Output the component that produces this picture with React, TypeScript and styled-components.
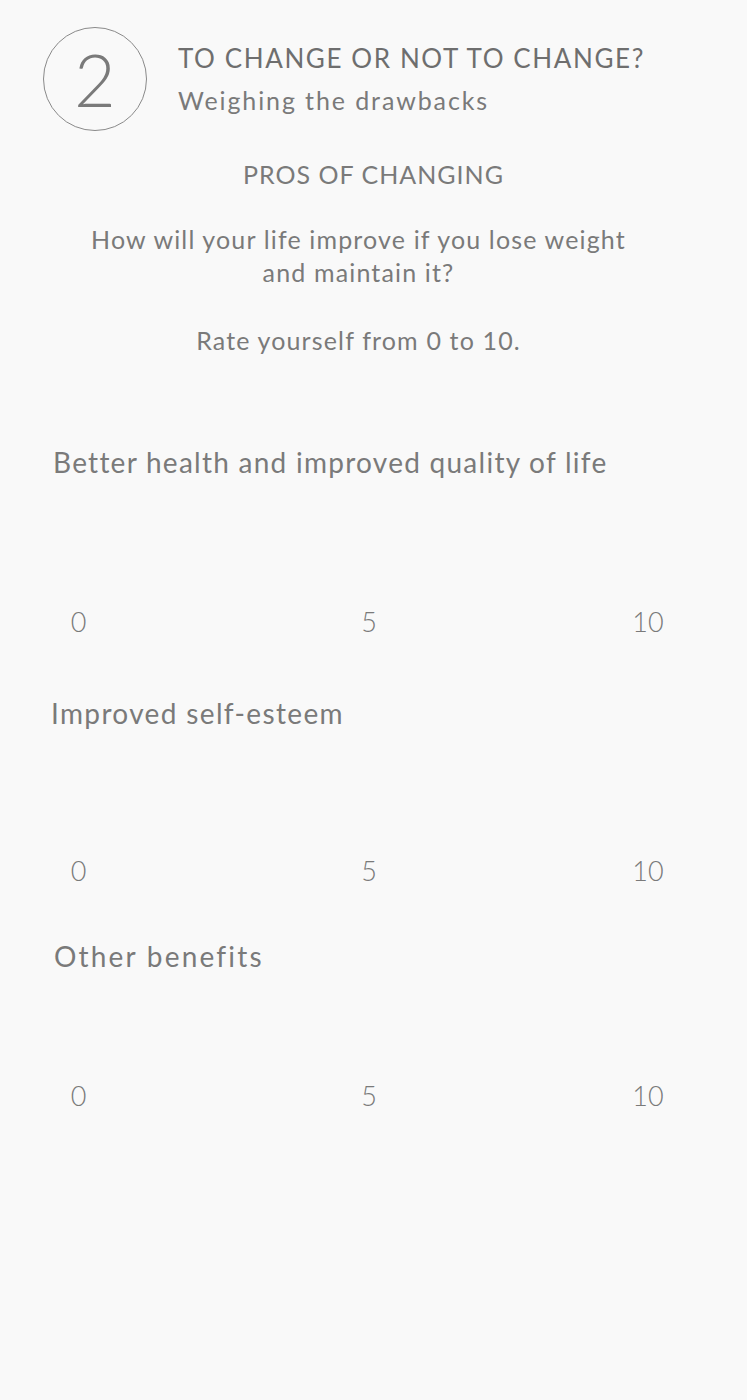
import React from "react";
import styled, { createGlobalStyle } from "styled-components";

const Global = createGlobalStyle`
  html, body { margin: 0; padding: 0; background: #f9f9f9; }
  body { font-family: Lato, "Noto Sans", sans-serif; color: #777; }
`;

const Page = styled.div`
  width: 747px;
  min-height: 1400px;
  background: #f9f9f9;
  display: flex;
  flex-direction: column;
`;

const Header = styled.header`
  display: flex;
  align-items: center;
  gap: 31px;
  padding: 27px 0 0 43px;
`;

const StepCircle = styled.div`
  width: 102px;
  height: 102px;
  border: 1px solid #8a8a8a;
  border-radius: 50%;
  display: flex;
  align-items: center;
  justify-content: center;
  font-size: 72px;
  font-weight: 300;
  line-height: 1;
  color: #7a7a7a;
  flex-shrink: 0;
`;

const HeaderText = styled.div`
  display: flex;
  flex-direction: column;
  gap: 10px;
`;

const Title = styled.h1`
  margin: 0;
  font-size: 26px;
  font-weight: 400;
  letter-spacing: 1.6px;
  color: #6e6e6e;
  line-height: 32px;
`;

const Subtitle = styled.div`
  font-size: 25px;
  font-weight: 400;
  letter-spacing: 1.9px;
  color: #7a7a7a;
  line-height: 32px;
`;

const Intro = styled.section`
  display: flex;
  flex-direction: column;
  align-items: center;
  text-align: center;
  padding: 27px 0 0;
`;

const SectionHeading = styled.h2`
  margin: 0;
  font-size: 25px;
  font-weight: 400;
  letter-spacing: 1px;
  color: #7a7a7a;
  line-height: 32px;
`;

const IntroText = styled.p<{ $top: number }>`
  margin: ${(p) => p.$top}px 30px 0 0;
  font-size: 25px;
  font-weight: 400;
  letter-spacing: 1.15px;
  color: #7a7a7a;
  line-height: 33px;
  max-width: 600px;
`;

const Items = styled.div`
  display: flex;
  flex-direction: column;
`;

const Item = styled.div<{ $top: number }>`
  display: flex;
  flex-direction: column;
  margin-top: ${(p) => p.$top}px;
`;

const ItemLabel = styled.div<{ $left: number; $spacing: number }>`
  padding-left: ${(p) => p.$left}px;
  font-size: 28px;
  font-weight: 400;
  letter-spacing: ${(p) => p.$spacing}px;
  color: #7a7a7a;
  line-height: 36px;
`;

const Scale = styled.div<{ $gap: number }>`
  display: grid;
  grid-template-columns: 157px 424px 134px;
  margin-top: ${(p) => p.$gap}px;
`;

const Tick = styled.span`
  text-align: center;
  font-size: 27px;
  font-weight: 300;
  color: #7a7a7a;
  line-height: 32px;
`;

const items = [
  { label: "Better health and improved quality of life", top: 87, left: 53, gap: 126, spacing: 1.26 },
  { label: "Improved self-esteem", top: 57, left: 51, gap: 124, spacing: 1.35 },
  { label: "Other benefits", top: 51, left: 54, gap: 106, spacing: 2.2 },
];

export default function App() {
  return (
    <Page>
      <Global />
      <Header>
        <StepCircle>2</StepCircle>
        <HeaderText>
          <Title>TO CHANGE OR NOT TO CHANGE?</Title>
          <Subtitle>Weighing the drawbacks</Subtitle>
        </HeaderText>
      </Header>
      <Intro>
        <SectionHeading>PROS OF CHANGING</SectionHeading>
        <IntroText $top={33}>
          How will your life improve if you lose weight
          <br />
          and maintain it?
        </IntroText>
        <IntroText $top={35}>Rate yourself from 0 to 10.</IntroText>
      </Intro>
      <Items>
        {items.map((it) => (
          <Item key={it.label} $top={it.top}>
            <ItemLabel $left={it.left} $spacing={it.spacing}>
              {it.label}
            </ItemLabel>
            <Scale $gap={it.gap}>
              <Tick>0</Tick>
              <Tick>5</Tick>
              <Tick>10</Tick>
            </Scale>
          </Item>
        ))}
      </Items>
    </Page>
  );
}
